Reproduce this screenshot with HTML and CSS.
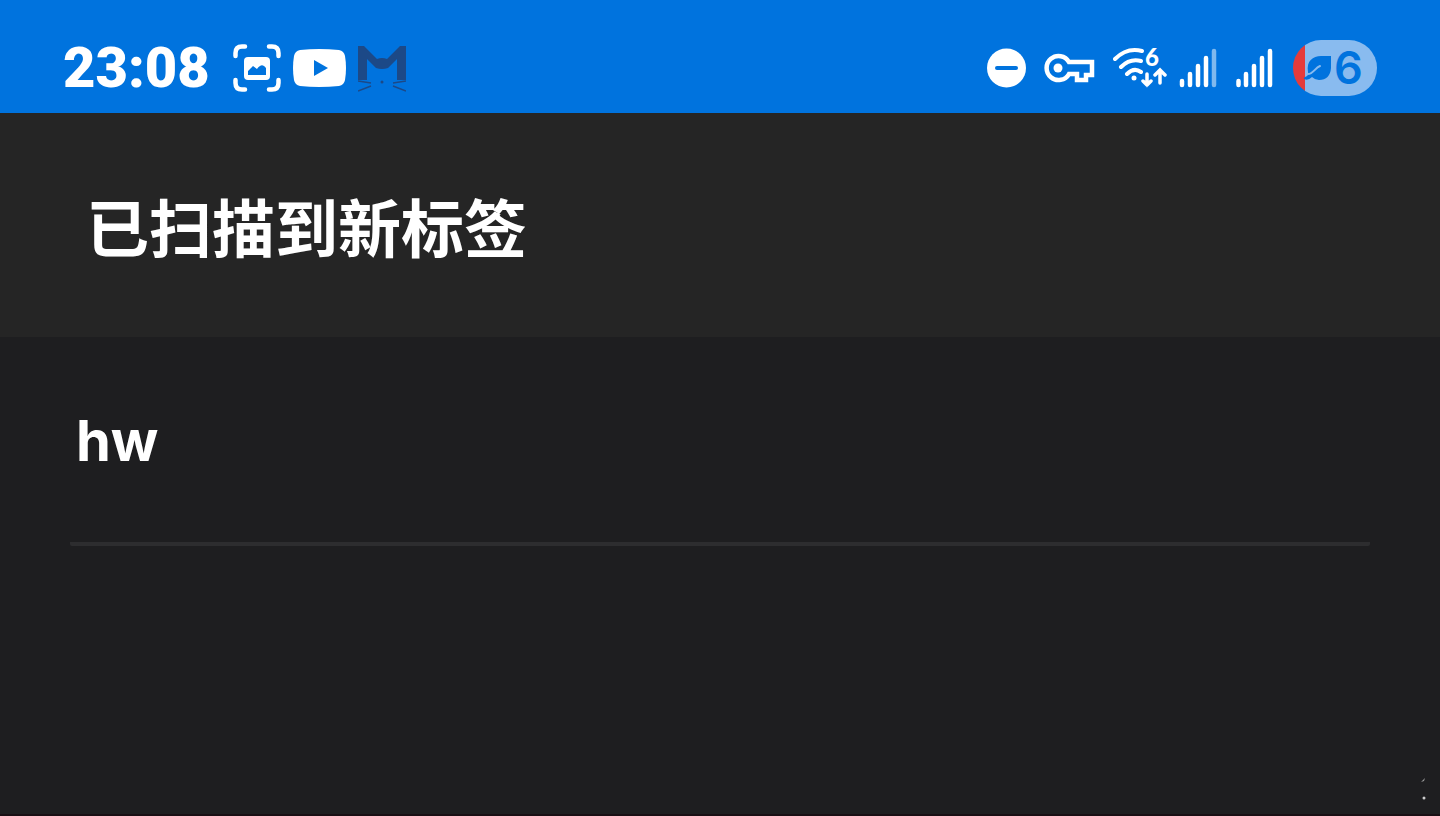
FILE: index.html
```html
<!DOCTYPE html>
<html lang="zh-CN">
<head>
    <meta charset="UTF-8">
    <meta name="viewport" content="width=device-width, initial-scale=1.0">
    <title>已扫描到新标签</title>
    <link rel="stylesheet" href="styles.css">
</head>
<body>

<!-- Status bar -->
<div class="status-bar">
    <div class="status-left">
        <time class="clock">23:08</time>
        <svg class="icon" width="48" height="48" viewBox="0 0 48 48" fill="none">
            <path d="M2.500 12V9Q2.500 2.500 9 2.500H12M36 2.500H39Q45.500 2.500 45.500 9V12M45.500 36V39Q45.500 45.500 39 45.500H36M12 45.500H9Q2.500 45.500 2.500 39V36" stroke="#fff" stroke-width="4.500" stroke-linecap="round"/>
            <rect x="11" y="13" width="26" height="23" rx="4" fill="#fff"/>
            <path d="M15 31V27L20 22L24 25Q29 18 33 24V31Z" fill="#0073de"/>
        </svg>
        <svg class="icon" width="53" height="38" viewBox="0 0 53 38">
            <path d="M7 1Q26 -1 46 1Q51 2 52 7Q54 19 52 31Q51 36 46 37Q26 39 7 37Q2 36 1 31Q-1 19 1 7Q2 2 7 1Z" fill="#fff"/>
            <path d="M21 11L35 19L21 27Z" fill="#0073de"/>
        </svg>
        <svg class="icon" width="48" height="48" viewBox="0 0 48 48">
            <path d="M0 36V2H6L19 15Q24 13 29 15L42 2H48V36H39V15L30 24Q24 26 18 24L9 15V36Z" fill="#1c4987"/>
            <path d="M0 37L13 39M0 47L13 42M35 39L48 37M35 42L48 47" stroke="#1c4987" stroke-width="1.500"/>
            <circle cx="24" cy="38" r="1.500" fill="#1c4987"/>
        </svg>
    </div>

    <div class="status-right">
        <svg class="icon" width="45" height="40" viewBox="0 0 45 40">
            <circle cx="19.500" cy="20" r="19.500" fill="#fff"/>
            <path d="M10 20H29" stroke="#0073de" stroke-width="4" stroke-linecap="round"/>
        </svg>
        <svg class="icon" width="57" height="32" viewBox="0 0 57 32" fill="none">
            <path d="M25 10H48V23H42V28H33V22H25A12 12 0 1 1 25 10Z" stroke="#fff" stroke-width="4.500"/>
            <circle cx="14" cy="16" r="4.500" fill="#fff"/>
        </svg>
        <svg class="icon" width="54" height="52" viewBox="0 -5 54 52" fill="none" stroke="#fff" stroke-width="4" stroke-linecap="round">
            <path d="M2 12Q14 0 29 4M8 20Q17 11 28 14M14 27Q21 20 28 25"/>
            <circle cx="21" cy="31" r="2.500" fill="#fff" stroke="none"/>
            <path d="M34 27V38M30 34L34 38L38 34M47 36V24M42 28L47 23L52 28" stroke-width="3.500"/>
            <text class="wifi-gen" x="32" y="19">6</text>
        </svg>
        <svg class="icon" width="45" height="42" viewBox="0 0 45 42" stroke="#fff" stroke-width="4.500" stroke-linecap="round">
            <path d="M3 34V38M11 27V38M19 19V38M27 11V38"/>
            <path d="M35 4V38" stroke="#80b9ee"/>
        </svg>
        <svg class="icon" width="45" height="42" viewBox="0 0 45 42" stroke="#fff" stroke-width="4.500" stroke-linecap="round">
            <path d="M2.500 34V38M10 27V38M18 19V38M26 11V38M34 4V38"/>
        </svg>
        <div class="battery">
            <svg width="29" height="26" viewBox="0 0 29 26">
                <path d="M28 1V13Q27 25 16 25Q12 25 9 22Q5 26 1 24Q0 23 2 22Q6 21 5 17C3 6 10 1 18 1Z" fill="#0073de"/>
                <path d="M5 19C10 19 12 13 17 11" fill="none" stroke="#89bbef" stroke-width="2" stroke-linecap="round"/>
            </svg>
            <span>6</span>
        </div>
    </div>
</div>

<header class="title-bar">
    <h1>已扫描到新标签</h1>
</header>

<main class="content">
    <ul class="tag-list">
        <li>hw</li>
    </ul>
</main>

<footer class="bottom-edge">
    <svg width="8" height="24" viewBox="0 0 8 24">
        <path d="M1 4L5 0L4 3Z" fill="#999"/>
        <circle cx="4" cy="20" r="1.500" fill="#ccc"/>
    </svg>
</footer>

</body>
</html>
```
FILE: styles.css
```css
:root {
    --blue: #0073de;
    --bar: #252525;
    --background: #1e1e20;
    --line: #2d2d2f;
}

* {
    box-sizing: border-box;
}

body {
    margin: 0;
    min-height: 100vh;
    display: flex;
    flex-direction: column;
    background-color: var(--background);
    color: #fff;
    font-family: Inter, "Noto Sans CJK SC", sans-serif;
}

/* Status bar */
.status-bar {
    display: flex;
    justify-content: space-between;
    align-items: center;
    padding: 23px 63px 0;
    height: 113px;
    background-color: var(--blue);
}

.status-left,
.status-right {
    display: flex;
    align-items: center;
    gap: 12px;
}

.icon {
    flex: none;
}

.clock {
    min-width: 158px;
    font-family: Roboto, sans-serif;
    font-size: 56px;
    line-height: 56px;
    font-weight: 900;
}

.wifi-gen {
    font-family: Lato, sans-serif;
    font-size: 24px;
    font-weight: 900;
    fill: #fff;
    stroke: none;
}

.battery {
    display: flex;
    align-items: center;
    gap: 2px;
    width: 84px;
    height: 56px;
    padding-left: 10px;
    border-radius: 28px;
    background: linear-gradient(to right, #e53b3b 12px, #89bbef 12px);
    color: var(--blue);
    font-size: 45px;
    line-height: 56px;
    font-weight: 600;
}

/* Title */
.title-bar {
    padding: 68px 86px;
    background-color: var(--bar);
}

.title-bar h1 {
    margin: 0;
    font-family: "Noto Sans CJK SC", sans-serif;
    font-size: 63px;
    line-height: 88px;
    font-weight: 700;
}

/* Scanned tags */
.content {
    flex: 1;
    padding: 0 70px;
}

.tag-list {
    margin: 0;
    padding: 0;
    list-style: none;
}

.tag-list li {
    padding: 70px 6px 67px;
    border-bottom: 4px solid var(--line);
    border-radius: 2px;
    font-size: 56px;
    line-height: 68px;
    font-weight: 700;
}

.bottom-edge {
    display: flex;
    justify-content: flex-end;
    padding: 0 12px 12px;
    border-bottom: 2px solid #190f14;
}
```
